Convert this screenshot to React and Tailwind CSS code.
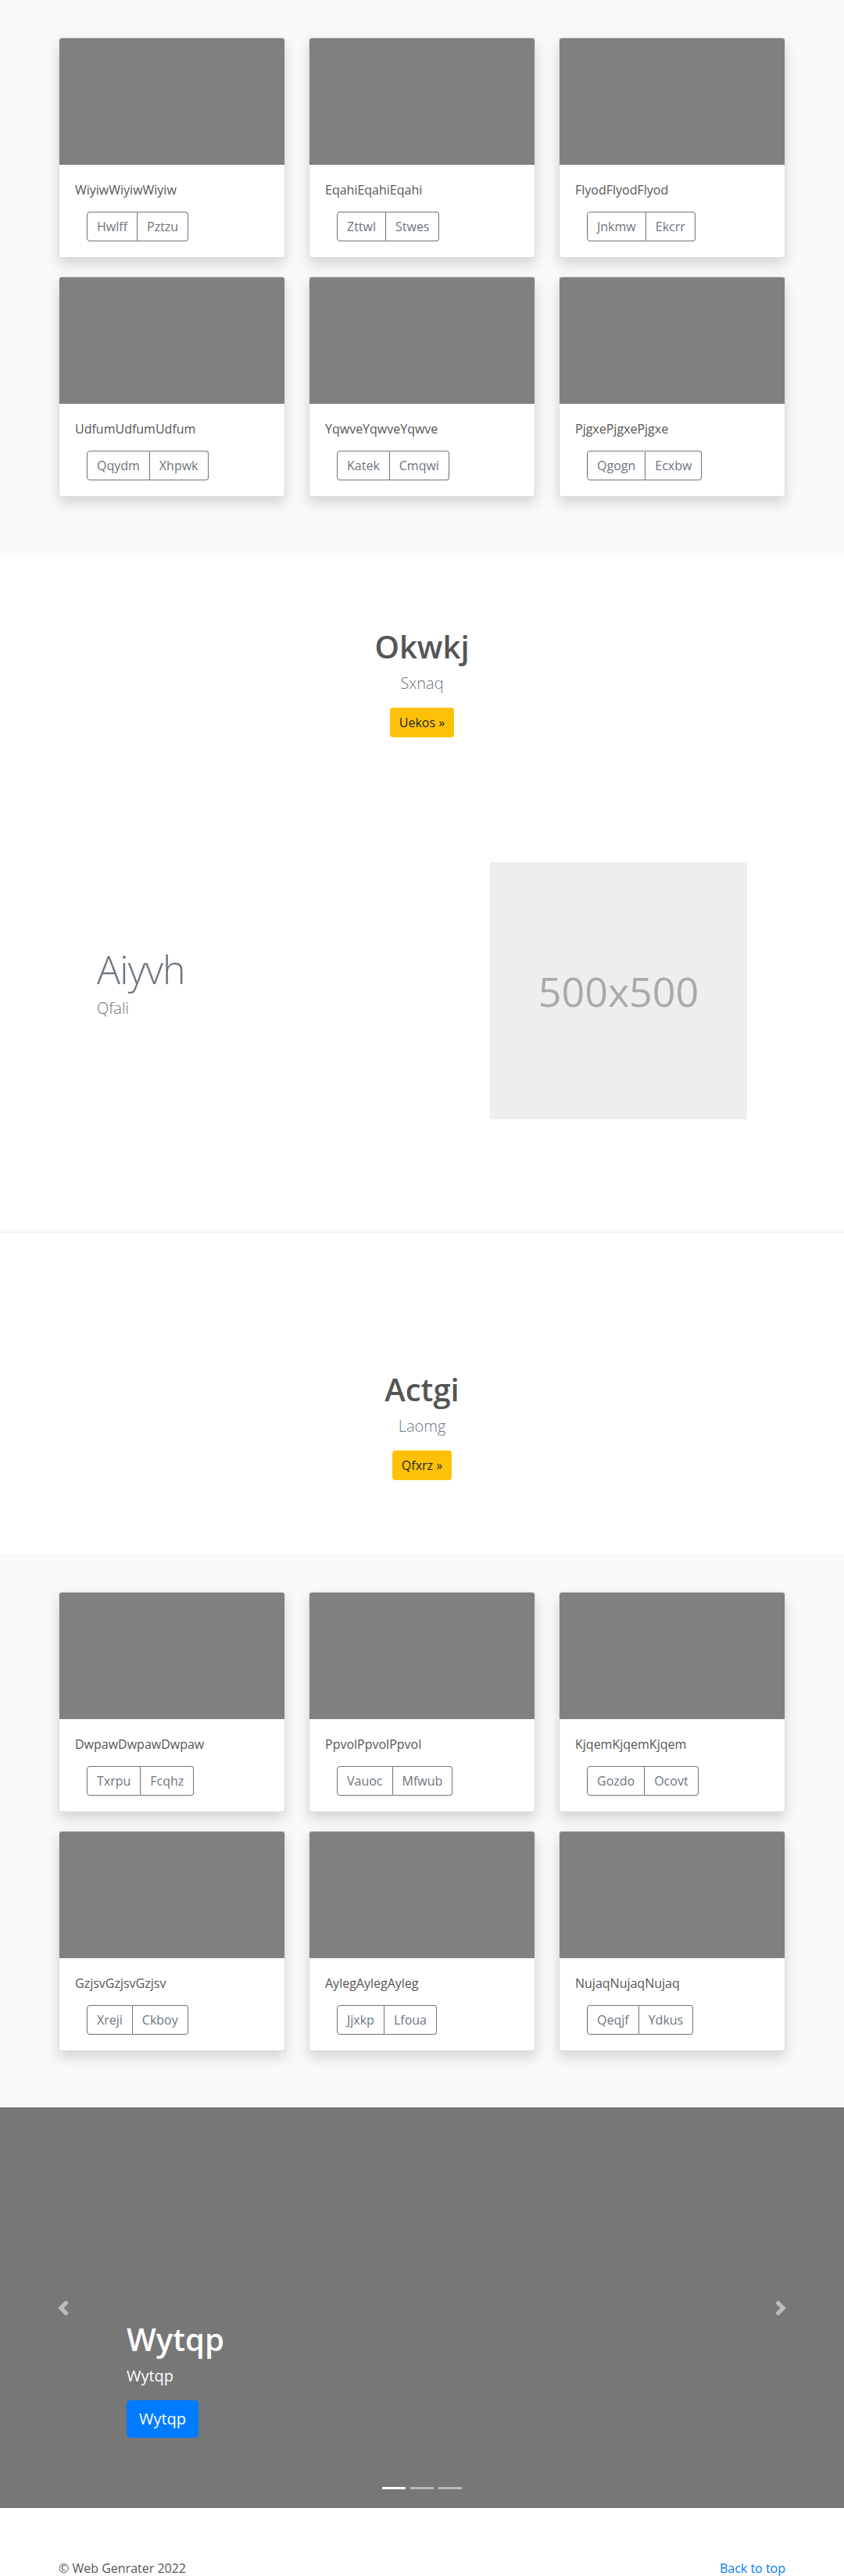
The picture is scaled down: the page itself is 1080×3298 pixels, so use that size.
import React from "react";

const album1 = [
  { t: "WiyiwWiyiwWiyiw", a: "Hwlff", b: "Pztzu" },
  { t: "EqahiEqahiEqahi", a: "Zttwl", b: "Stwes" },
  { t: "FlyodFlyodFlyod", a: "Jnkmw", b: "Ekcrr" },
  { t: "UdfumUdfumUdfum", a: "Qqydm", b: "Xhpwk" },
  { t: "YqwveYqwveYqwve", a: "Katek", b: "Cmqwi" },
  { t: "PjgxePjgxePjgxe", a: "Qgogn", b: "Ecxbw" },
];

const album2 = [
  { t: "DwpawDwpawDwpaw", a: "Txrpu", b: "Fcqhz" },
  { t: "PpvolPpvolPpvol", a: "Vauoc", b: "Mfwub" },
  { t: "KjqemKjqemKjqem", a: "Gozdo", b: "Ocovt" },
  { t: "GzjsvGzjsvGzjsv", a: "Xreji", b: "Ckboy" },
  { t: "AylegAylegAyleg", a: "Jjxkp", b: "Lfoua" },
  { t: "NujaqNujaqNujaq", a: "Qeqjf", b: "Ydkus" },
];

function Card({ t, a, b }) {
  return (
    <div className="bg-white border border-[rgba(0,0,0,0.125)] rounded-[4px] overflow-hidden shadow-[0_8px_16px_rgba(0,0,0,0.15)]">
      <div className="h-[162px] bg-[#808080]" />
      <div className="p-[20px]">
        <p className="text-[16px] leading-[24px] text-[#555] mb-[16px]">{t}</p>
        <div className="ml-[15px] inline-flex">
          <button className="h-[38px] px-[12px] text-[16px] text-[#6c757d] border border-[#6c757d] rounded-l-[4px] bg-transparent">
            {a}
          </button>
          <button className="h-[38px] px-[12px] text-[16px] text-[#6c757d] border border-[#6c757d] border-l-0 rounded-r-[4px] bg-transparent">
            {b}
          </button>
        </div>
      </div>
    </div>
  );
}

function Album({ items }) {
  return (
    <section className="bg-[#f8f9fa] py-[48px]">
      <div className="w-[930px] mx-auto grid grid-cols-3 gap-x-[30px] gap-y-[24px] pb-[24px]">
        {items.map((it) => (
          <Card key={it.t} {...it} />
        ))}
      </div>
    </section>
  );
}

function Hero({ title, lead, btn, pt, pb }) {
  return (
    <div className={`text-center ${pt} ${pb}`}>
      <h1 className="text-[40px] leading-[48px] font-semibold text-[#555] mb-[8px]">{title}</h1>
      <p className="text-[20px] leading-[30px] font-light text-[#6c757d] mb-[16px]">{lead}</p>
      <button className="h-[38px] px-[12px] bg-[#ffc107] rounded-[4px] text-[16px] text-[#212529]">
        {btn}
      </button>
    </div>
  );
}

function Chevron({ dir }) {
  return (
    <svg width="20" height="20" viewBox="0 0 8 8" fill="#fff">
      {dir === "left" ? (
        <path d="M5.25 0l-4 4 4 4 1.5-1.5L4.25 4l2.5-2.5L5.25 0z" />
      ) : (
        <path d="M2.75 0l-1.5 1.5L3.75 4l-2.5 2.5L2.75 8l4-4-4-4z" />
      )}
    </svg>
  );
}

export default function App() {
  return (
    <div
      className="bg-white text-[#212529]"
      style={{ fontFamily: '"Segoe UI", "Open Sans", "Noto Sans", sans-serif' }}
    >
      <Album items={album1} />

      <Hero title="Okwkj" lead="Sxnaq" btn="Uekos »" pt="pt-[96px]" pb="pb-0" />

      <div className="w-[930px] mx-auto flex items-center mt-[160px] mb-[144px]">
        <div className="flex-1 pl-[49px]">
          <h2 className="text-[50px] leading-[50px] font-light tracking-[-0.8px] text-[#6c757d] mb-[10px]">
            Aiyvh
          </h2>
          <p className="text-[20px] leading-[30px] font-light text-[#6c757d] mb-[16px]">Qfali</p>
        </div>
        <div className="w-[329px] h-[329px] mr-[49px] bg-[#eeeeee] flex items-center justify-center">
          <span className="text-[52px] text-[#aaaaaa] leading-none">500x500</span>
        </div>
      </div>

      <div className="border-t border-[#e6e6e6]" />

      <Hero title="Actgi" lead="Laomg" btn="Qfxrz »" pt="pt-[177px]" pb="pb-[95px]" />

      <Album items={album2} />

      <div className="relative h-[513px] bg-[#777777] overflow-hidden">
        <div className="absolute left-0 top-0 h-full w-[162px] flex items-center justify-center opacity-50">
          <Chevron dir="left" />
        </div>
        <div className="absolute right-0 top-0 h-full w-[162px] flex items-center justify-center opacity-50">
          <Chevron dir="right" />
        </div>
        <div className="absolute left-[162px] top-[273px] text-white">
          <h1 className="text-[40px] leading-[48px] font-semibold mb-[8px]">Wytqp</h1>
          <p className="text-[20px] leading-[30px] mb-[16px]">Wytqp</p>
          <button className="h-[48px] px-[16px] bg-[#007bff] rounded-[5px] text-[20px] text-white">
            Wytqp
          </button>
        </div>
        <div className="absolute left-0 right-0 bottom-[24px] flex justify-center gap-[6px]">
          <span className="w-[30px] h-[3px] bg-white" />
          <span className="w-[30px] h-[3px] bg-white/50" />
          <span className="w-[30px] h-[3px] bg-white/50" />
        </div>
      </div>

      <footer className="w-[930px] mx-auto pt-[65px] flex justify-between text-[16px] leading-[24px]">
        <p className="text-[#555]">© Web Genrater 2022</p>
        <a href="#" className="text-[#007bff]">Back to top</a>
      </footer>
    </div>
  );
}
